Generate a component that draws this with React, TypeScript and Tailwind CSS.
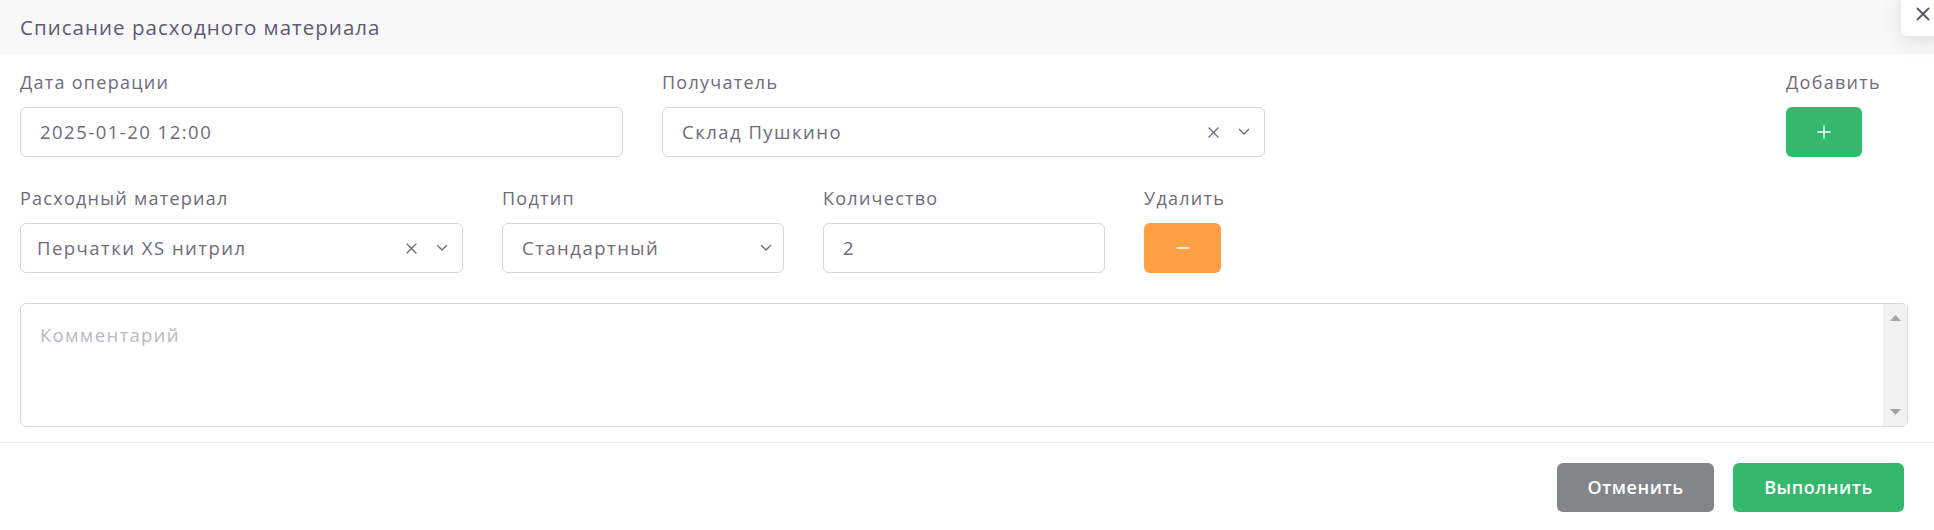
import React from "react";

const Chevron = () => (
  <svg width="12" height="8" viewBox="0 0 12 8" fill="none">
    <path d="M1.5 1.5 L6 6 L10.5 1.5" stroke="#6e6b7b" strokeWidth="1.4" strokeLinecap="round" strokeLinejoin="round" />
  </svg>
);

const Cross = () => (
  <svg width="11" height="11" viewBox="0 0 11 11" fill="none">
    <path d="M1 1 L10 10 M10 1 L1 10" stroke="#6e6b7b" strokeWidth="1.3" strokeLinecap="round" />
  </svg>
);

const Label = ({ children }: { children: React.ReactNode }) => (
  <div className="h-[25px] leading-[25px] mb-[12px] text-[18px] text-[#6e6b7b] tracking-[0.07em] whitespace-nowrap">
    {children}
  </div>
);

const Box = ({ children, className = "" }: { children?: React.ReactNode; className?: string }) => (
  <div
    className={
      "h-[50px] border border-[#d8d6de] rounded-[6px] bg-white flex items-center text-[18.5px] text-[#6e6b7b] tracking-[0.08em] " +
      className
    }
  >
    {children}
  </div>
);

export default function App() {
  return (
    <div className="relative w-[1934px] h-[530px] bg-white overflow-hidden font-['Open_Sans',sans-serif]">
      {/* header */}
      <div className="h-[54px] bg-[#f8f8f8] flex items-center px-5">
        <div className="text-[20.5px] text-[#5e5873] tracking-[0.05em] whitespace-nowrap">Списание расходного материала</div>
      </div>
      {/* close button */}
      <div className="absolute right-[-11px] top-[-8px] w-[44px] h-[44px] bg-white rounded-[6px] shadow-[0_5px_20px_0_rgba(34,41,47,0.12)] flex items-center justify-center">
        <svg width="14" height="14" viewBox="0 0 14 14" fill="none">
          <path d="M1.5 1.5 L12.5 12.5 M12.5 1.5 L1.5 12.5" stroke="#5e5873" strokeWidth="2" strokeLinecap="round" />
        </svg>
      </div>

      {/* body */}
      <div className="px-5 pt-4">
        {/* row 1 */}
        <div className="flex items-start">
          <div className="w-[603px]">
            <Label>Дата операции</Label>
            <Box className="pl-[19px]">2025-01-20 12:00</Box>
          </div>
          <div className="w-[603px] ml-[39px]">
            <Label>Получатель</Label>
            <Box className="pl-[19px] pr-[14px]">
              <span className="flex-1">Склад Пушкино</span>
              <span className="flex items-center gap-[19px]">
                <Cross />
                <Chevron />
              </span>
            </Box>
          </div>
          <div className="ml-[521px]">
            <Label>Добавить</Label>
            <div className="w-[76px] h-[50px] rounded-[6px] bg-[#34b86e] flex items-center justify-center">
              <svg width="14" height="14" viewBox="0 0 14 14" fill="none">
                <path d="M7 0.5 V13.5 M0.5 7 H13.5" stroke="white" strokeWidth="1.4" />
              </svg>
            </div>
          </div>
        </div>

        {/* row 2 */}
        <div className="flex items-start mt-[29px]">
          <div className="w-[443px]">
            <Label>Расходный материал</Label>
            <Box className="pl-[16px] pr-[14px]">
              <span className="flex-1">Перчатки XS нитрил</span>
              <span className="flex items-center gap-[19px]">
                <Cross />
                <Chevron />
              </span>
            </Box>
          </div>
          <div className="w-[282px] ml-[39px]">
            <Label>Подтип</Label>
            <Box className="pl-[19px] pr-[11px]">
              <span className="flex-1">Стандартный</span>
              <Chevron />
            </Box>
          </div>
          <div className="w-[282px] ml-[39px]">
            <Label>Количество</Label>
            <Box className="pl-[19px]">2</Box>
          </div>
          <div className="ml-[39px]">
            <Label>Удалить</Label>
            <div className="w-[77px] h-[50px] rounded-[6px] bg-[#ffa044] flex items-center justify-center">
              <svg width="14" height="4" viewBox="0 0 14 4" fill="none">
                <path d="M0.5 2 H13.5" stroke="white" strokeWidth="1.6" />
              </svg>
            </div>
          </div>
        </div>

        {/* comment */}
        <div className="mt-[30px] mr-[6px] h-[124px] border border-[#d8d6de] rounded-[6px] flex overflow-hidden">
          <div className="flex-1 pl-[19px] pt-[18px] text-[18.5px] text-[#b9b9c3] tracking-[0.07em] leading-[25px]">
            Комментарий
          </div>
          <div className="w-[24px] bg-[#f1f1f1] flex flex-col items-center justify-between py-[11px]">
            <svg width="11" height="6" viewBox="0 0 11 6"><path d="M5.5 0 L11 6 H0 Z" fill="#a3a3a3" /></svg>
            <svg width="11" height="6" viewBox="0 0 11 6"><path d="M0 0 H11 L5.5 6 Z" fill="#a3a3a3" /></svg>
          </div>
        </div>
      </div>

      {/* footer */}
      <div className="mt-[15px] border-t border-[#ebe9f1] flex justify-end gap-[19px] pt-[20px] pr-[30px]">
        <div className="w-[157px] h-[49px] rounded-[6px] bg-[#82868b] text-white text-[18px] font-semibold tracking-[0.03em] flex items-center justify-center">
          Отменить
        </div>
        <div className="w-[171px] h-[49px] rounded-[6px] bg-[#34b86e] text-white text-[18px] font-semibold tracking-[0.03em] flex items-center justify-center">
          Выполнить
        </div>
      </div>
    </div>
  );
}
